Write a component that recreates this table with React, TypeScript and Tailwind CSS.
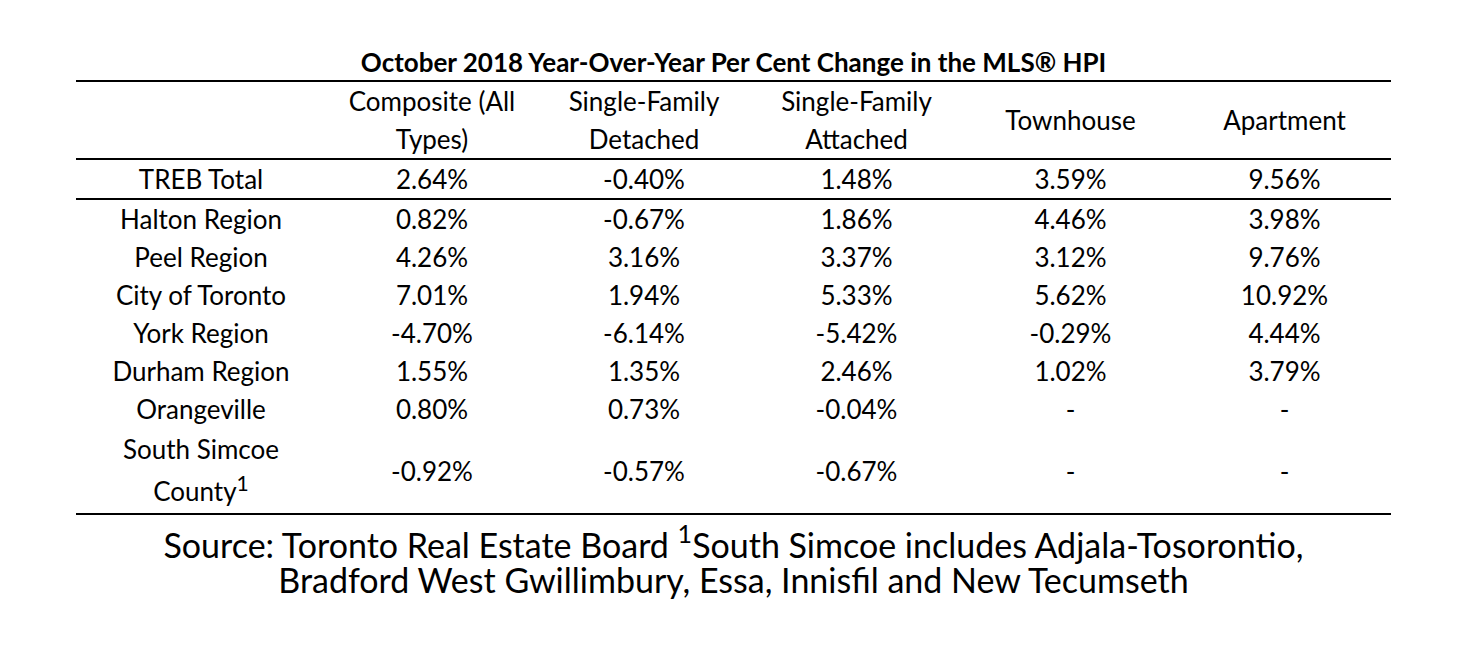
import React from 'react'

const COLS = ['Composite (All Types)', 'Single-Family Detached', 'Single-Family Attached', 'Townhouse', 'Apartment']

const ROWS: { name: React.ReactNode; values: string[] }[] = [
  { name: 'Halton Region', values: ['0.82%', '-0.67%', '1.86%', '4.46%', '3.98%'] },
  { name: 'Peel Region', values: ['4.26%', '3.16%', '3.37%', '3.12%', '9.76%'] },
  { name: 'City of Toronto', values: ['7.01%', '1.94%', '5.33%', '5.62%', '10.92%'] },
  { name: 'York Region', values: ['-4.70%', '-6.14%', '-5.42%', '-0.29%', '4.44%'] },
  { name: 'Durham Region', values: ['1.55%', '1.35%', '2.46%', '1.02%', '3.79%'] },
  { name: 'Orangeville', values: ['0.80%', '0.73%', '-0.04%', '-', '-'] },
  {
    name: (
      <>
        South Simcoe
        <br />
        County<sup className="text-[21px] relative -top-[10px]">1</sup>
      </>
    ),
    values: ['-0.92%', '-0.57%', '-0.67%', '-', '-'],
  },
]

export default function App() {
  return (
    <div className="w-[1482px] h-[648px] bg-white text-black font-['Lato',sans-serif]">
      <div className="pt-[46px] pl-[76px] w-[1391px]">
        <h1 className="text-center font-bold text-[26px] leading-[32px] h-[34px]">
          October 2018 Year-Over-Year Per Cent Change in the MLS® HPI
        </h1>
        <table className="w-[1315px] table-fixed border-collapse text-[26px] leading-[38px] text-center">
          <colgroup>
            <col className="w-[250px]" />
            <col className="w-[212px]" />
            <col className="w-[212px]" />
            <col className="w-[213px]" />
            <col className="w-[215px]" />
            <col className="w-[213px]" />
          </colgroup>
          <thead>
            <tr className="border-t-2 border-b-2 border-black h-[77px]">
              <th className="font-normal" />
              {COLS.map(c => (
                <th key={c} className="font-normal px-2 align-middle">
                  {c}
                </th>
              ))}
            </tr>
          </thead>
          <tbody>
            <tr className="border-b-2 border-black h-[40px]">
              <td>TREB Total</td>
              {['2.64%', '-0.40%', '1.48%', '3.59%', '9.56%'].map((v, i) => (
                <td key={i}>{v}</td>
              ))}
            </tr>
            {ROWS.map((r, i) => (
              <tr key={i} className={i === ROWS.length - 1 ? 'border-b-2 border-black' : ''}>
                <td className={i === ROWS.length - 1 ? 'leading-[42px] pb-[1px]' : ''}>{r.name}</td>
                {r.values.map((v, j) => (
                  <td key={j}>{v}</td>
                ))}
              </tr>
            ))}
          </tbody>
        </table>
        <p className="text-center text-[34px] leading-[35px] pt-[12px] w-[1315px]">
          Source: Toronto Real Estate Board <sup className="text-[25px] relative -top-[15px]">1</sup>South Simcoe includes Adjala-Tosorontio,
          <br />
          Bradford West Gwillimbury, Essa, Innisfil and New Tecumseth
        </p>
      </div>
    </div>
  )
}
